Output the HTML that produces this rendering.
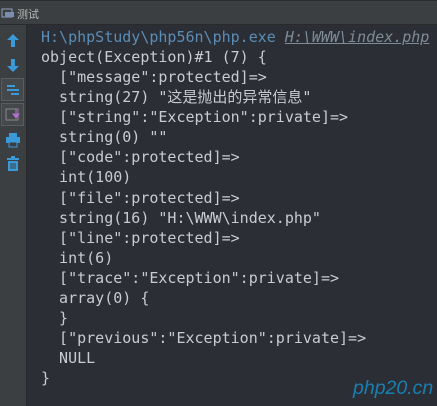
<!DOCTYPE html><html><head><meta charset="utf-8"><style>
body{margin:0;width:437px;height:406px;overflow:hidden;background:#2b2e35;position:relative;font-family:"Liberation Mono","Noto Sans CJK SC",monospace}
.top{position:absolute;left:0;top:0;width:437px;height:25px;background:#3c3f41;border-top:1px solid #2b2b2b;box-sizing:border-box;border-bottom:1px solid #2a2a2a}
.top span{position:absolute;left:17px;top:5px;font:11px "Noto Sans CJK SC",sans-serif;color:#bbb}
.side{position:absolute;left:0;top:25px;width:26px;height:381px;background:#3c3f41;border-right:1px solid #2a2a2a}
pre{position:absolute;left:41px;top:27px;margin:0;font-size:15px;line-height:20.06px;color:#c8ccd0}
.h{color:#5b8db5}.u{color:#7f8c98;text-decoration:underline;font-style:italic}
.w{position:absolute;left:353px;top:377px;font:italic 19.5px "Liberation Sans",sans-serif;color:#1a7fb0}
.ic{position:absolute;left:4px}
</style></head><body>
<div class="top"><svg width="14" height="12" style="position:absolute;left:1px;top:6px"><rect x="1" y="2" width="10" height="8" fill="none" stroke="#8fa0c0"/><rect x="4" y="5" width="9" height="5" fill="#7a8fb0"/></svg><span>测试</span></div>
<div class="side">
<svg class="ic" style="top:7px" width="18" height="18"><path d="M9 2L3 8h4v7h4V8h4z" fill="#3a9ad8"/></svg>
<svg class="ic" style="top:31px" width="18" height="18"><path d="M9 16L3 10h4V3h4v7h4z" fill="#3a9ad8"/></svg>
<div style="position:absolute;left:1px;top:53px;width:21px;height:21px;border:1px solid #5a5d60;background:#45484a"></div>
<svg class="ic" style="top:56px" width="18" height="18"><path d="M3 5h8M3 9h12M7 13h8" stroke="#3a9ad8" stroke-width="2"/></svg>
<div style="position:absolute;left:1px;top:78px;width:21px;height:21px;border:1px solid #5a5d60;background:#45484a"></div>
<svg class="ic" style="top:81px" width="18" height="18"><rect x="2" y="3" width="12" height="11" fill="none" stroke="#888"/><path d="M12 3v6M9 8l3 4 3-4z" stroke="#b070d0" fill="#b070d0"/></svg>
<svg class="ic" style="top:106px" width="18" height="18"><rect x="5" y="2" width="8" height="4" fill="#3a9ad8"/><rect x="2" y="6" width="14" height="6" fill="#3a9ad8"/><rect x="5" y="11" width="8" height="5" fill="#3c3f41" stroke="#3a9ad8"/></svg>
<svg class="ic" style="top:130px" width="18" height="18"><path d="M3 4h12M7 2h4" stroke="#3a9ad8" stroke-width="2"/><path d="M4 6h10v10H4z" fill="#3a9ad8"/><path d="M7 8v6M9 8v6M11 8v6" stroke="#3c3f41"/></svg>
</div>
<pre><span class="h">H:\phpStudy\php56n\php.exe</span> <span class="u">H:\WWW\index.php</span>
object(Exception)#1 (7) {
  ["message":protected]=&gt;
  string(27) "这是抛出的异常信息"
  ["string":"Exception":private]=&gt;
  string(0) ""
  ["code":protected]=&gt;
  int(100)
  ["file":protected]=&gt;
  string(16) "H:\WWW\index.php"
  ["line":protected]=&gt;
  int(6)
  ["trace":"Exception":private]=&gt;
  array(0) {
  }
  ["previous":"Exception":private]=&gt;
  NULL
}</pre>
<div class="w">php20.cn</div>
</body></html>
